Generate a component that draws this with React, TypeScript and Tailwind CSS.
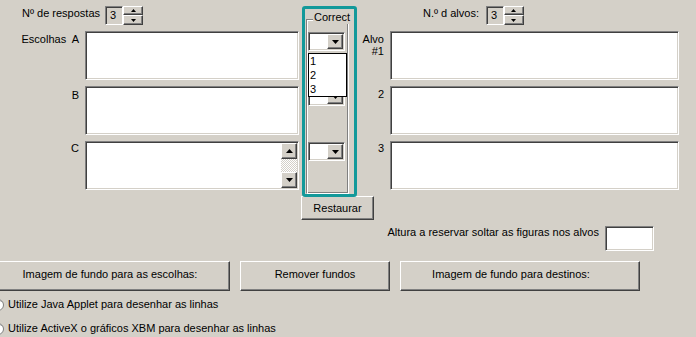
import React from 'react'

const sunken =
  'border border-t-[#808080] border-l-[#808080] border-b-white border-r-white shadow-[inset_1px_1px_0_#404040,inset_-1px_-1px_0_#d4d0c8]'
const raised =
  'border border-t-white border-l-white border-b-[#404040] border-r-[#404040] shadow-[inset_-1px_-1px_0_#808080,inset_1px_1px_0_#d4d0c8] bg-[#d4d0c8]'

const Tri: React.FC<{ up?: boolean; small?: boolean }> = ({ up = false, small = false }) => {
  const w = small ? 5 : 7
  const h = small ? 3 : 4
  const pts = up ? `${w / 2},0 ${w},${h} 0,${h}` : `0,0 ${w},0 ${w / 2},${h}`
  return (
    <svg width={w} height={h} viewBox={`0 0 ${w} ${h}`} className="block">
      <polygon points={pts} fill="#000" />
    </svg>
  )
}

const Spinner: React.FC<{ value: string }> = ({ value }) => (
  <div className="flex h-[19px]">
    <div className={`${sunken} w-[18px] h-full flex items-center pl-[4px] bg-[#d4d0c8]`}>{value}</div>
    <div className="flex flex-col w-[20px] h-full">
      <div className={`${raised} h-[9px] flex items-center justify-center`}>
        <Tri up small />
      </div>
      <div className={`${raised} h-[10px] flex items-center justify-center`}>
        <Tri small />
      </div>
    </div>
  </div>
)

const Combo: React.FC<{ children?: React.ReactNode }> = ({ children }) => (
  <div className={`relative w-[37px] h-[19px] bg-white p-[1px] flex justify-end ${sunken}`}>
    <div className={`w-[16px] h-full flex items-center justify-center ${raised}`}>
      <Tri />
    </div>
    {children}
  </div>
)

const TextBox: React.FC<{ width: string; scroll?: boolean }> = ({ width, scroll = false }) => (
  <div className={`${width} h-[49px] bg-white p-[1px] flex justify-end ${sunken}`}>
    {scroll && (
      <div className="w-[16px] h-full flex flex-col">
        <div className={`h-[16px] flex items-center justify-center ${raised}`}>
          <Tri up />
        </div>
        <div className="flex-1 bg-[repeating-conic-gradient(#ffffff_0%_25%,#d4d0c8_0%_50%)] bg-[length:2px_2px]" />
        <div className={`h-[16px] flex items-center justify-center ${raised}`}>
          <Tri />
        </div>
      </div>
    )}
  </div>
)

const Button: React.FC<{ className: string; children: React.ReactNode }> = ({ className, children }) => (
  <div className={`${raised} flex justify-center ${className}`}>{children}</div>
)

const Radio: React.FC<{ label: string }> = ({ label }) => (
  <div className="flex items-center gap-[4px]">
    <div className="-ml-[8px] w-[12px] h-[12px] rounded-full bg-white border border-[#808080] shadow-[inset_1px_1px_0_#404040]" />
    <span>{label}</span>
  </div>
)

export default function App() {
  return (
    <div className="relative w-[696px] h-[337px] overflow-hidden bg-[#d4d0c8] font-['Liberation_Sans',Arial,sans-serif] text-[11px] leading-[13px] text-black">
      <div className="flex items-start">
        {/* escolhas */}
        <div className="w-[299px] shrink-0 flex flex-col">
          <div className="h-[31px] pt-[6px] pl-[22px] flex items-start gap-[5px]">
            <span className="mt-[1px]">Nº de respostas</span>
            <Spinner value="3" />
          </div>
          <div className="h-[55px] flex">
            <div className="w-[85px] pr-[6px] pt-[2px] text-right whitespace-pre">Escolhas  A</div>
            <TextBox width="w-[214px]" />
          </div>
          <div className="h-[55px] flex">
            <div className="w-[85px] pr-[6px] pt-[3px] text-right">B</div>
            <TextBox width="w-[214px]" />
          </div>
          <div className="h-[49px] flex">
            <div className="w-[85px] pr-[6px] pt-[1px] text-right">C</div>
            <TextBox width="w-[214px]" scroll />
          </div>
        </div>

        {/* correct */}
        <div className="w-[58px] shrink-0 pt-[6px] flex flex-col items-start">
          <div className="relative z-10 ml-[3px] w-[55px] h-[191px] border-[3px] border-[#13999a] rounded-[3px]">
            <div className="relative ml-[1px] mt-[10px] w-[43px] h-[175px] border border-t-[#808080] border-l-[#808080] border-b-white border-r-white shadow-[inset_1px_1px_0_#ffffff,inset_-1px_-1px_0_#808080] pl-[1px] pt-[12px] flex flex-col gap-[36px]">
              <span className="absolute left-[6px] -top-[9px] px-[1px] bg-[#d4d0c8] whitespace-nowrap">Correct</span>
              <Combo>
                <div className="absolute -left-[1px] top-[20px] z-20 w-[39px] h-[44px] bg-white border border-black pl-[1px] leading-[14px]">
                  <div>1</div>
                  <div>2</div>
                  <div>3</div>
                </div>
              </Combo>
              <Combo />
              <Combo />
            </div>
          </div>
          <Button className="ml-[2px] -mt-[1px] w-[73px] h-[24px] shrink-0 items-center">Restaurar</Button>
        </div>

        {/* alvos */}
        <div className="flex-1 flex flex-col">
          <div className="h-[31px] pt-[6px] pl-[66px] flex items-start gap-[7px]">
            <span className="mt-[1px]">N.º d alvos:</span>
            <Spinner value="3" />
          </div>
          <div className="h-[55px] flex">
            <div className="w-[33px] pr-[6px] pt-[2px] text-right leading-[12px]">
              Alvo
              <br />
              #1
            </div>
            <TextBox width="w-[289px]" />
          </div>
          <div className="h-[55px] flex">
            <div className="w-[33px] pr-[6px] pt-[2px] text-right">2</div>
            <TextBox width="w-[289px]" />
          </div>
          <div className="h-[49px] flex">
            <div className="w-[33px] pr-[6px] pt-[1px] text-right">3</div>
            <TextBox width="w-[289px]" />
          </div>
        </div>
      </div>

      <div className="mt-[6px] flex justify-end items-start gap-[6px] pr-[42px]">
        <span>Altura a reservar soltar as figuras nos alvos</span>
        <div className={`w-[49px] h-[25px] bg-white ${sunken}`} />
      </div>

      <div className="mt-[10px] -ml-[10px] flex gap-[10px]">
        <Button className="w-[240px] h-[30px] pt-[6px]">Imagem de fundo para as escolhas:</Button>
        <Button className="w-[150px] h-[30px] pt-[6px]">Remover fundos</Button>
        <Button className="w-[240px] h-[30px] pt-[6px] pr-[18px]">Imagem de fundo para destinos:</Button>
      </div>

      <div className="mt-[7px] flex flex-col gap-[11px]">
        <Radio label="Utilize Java Applet para desenhar as linhas" />
        <Radio label="Utilize ActiveX o gráficos XBM para desenhar as linhas" />
      </div>
    </div>
  )
}
